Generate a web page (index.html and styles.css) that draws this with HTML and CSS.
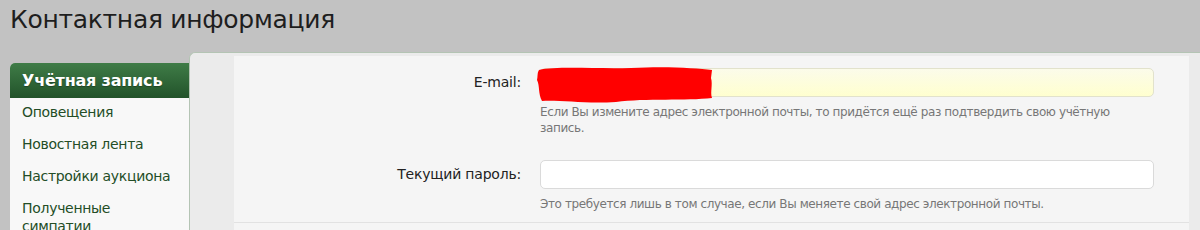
FILE: index.html
```html
<!DOCTYPE html>
<html lang="ru">
  <head>
    <meta charset="UTF-8" />
    <title>Контактная информация</title>
    <link rel="stylesheet" href="styles.css">
  </head>
  <body>
    <h1 class="page-title">Контактная информация</h1>

    <div class="page-body">
      <div class="sidebar">
        <div class="sidebar-header">Учётная запись</div>
        <div class="sidebar-item">Оповещения</div>
        <div class="sidebar-item">Новостная лента</div>
        <div class="sidebar-item">Настройки аукциона</div>
        <div class="sidebar-item">Полученные симпатии</div>
      </div>

      <div class="panel">
        <div class="panel-content">
          <div class="form-row">
            <label class="form-label">E-mail:</label>
            <div class="form-field">
              <div class="input-wrap">
                <div class="text-input email-input"></div>
                <svg class="scribble" width="180" height="40" viewBox="0 0 180 40">
                  <path d="M3 5 C20 1 60 4 95 3 C130 1 160 3 176 5 L175 13 C177 20 174 27 176 33 C150 36 110 33 80 37 C50 39 25 35 6 36 C2 29 4 21 1 15 C2 11 1 8 3 5 Z" fill="#ff0000" />
                </svg>
              </div>
              <div class="hint">Если Вы измените адрес электронной почты, то придётся ещё раз подтвердить свою учётную запись.</div>
            </div>
          </div>

          <div class="form-row">
            <label class="form-label">Текущий пароль:</label>
            <div class="form-field">
              <div class="text-input"></div>
              <div class="hint">Это требуется лишь в том случае, если Вы меняете свой адрес электронной почты.</div>
            </div>
          </div>

          <div class="divider"></div>
        </div>
      </div>
    </div>
  </body>
</html>
```

FILE: styles.css
```css
* {
  margin: 0;
  padding: 0;
  box-sizing: border-box;
}

body {
  background-color: #c2c2c2;
  font-family: "DejaVu Sans", Verdana, sans-serif;
  overflow: hidden;
  height: 230px;
}

.page-title {
  font-size: 25px;
  font-weight: normal;
  line-height: 30px;
  color: #1e1e1e;
  padding: 5px 10px 17px;
  letter-spacing: -0.3px;
}

.page-body {
  display: flex;
  align-items: flex-start;
}

.sidebar {
  width: 179px;
  margin-left: 10px;
  margin-top: 11px;
  background-color: #f8f8f8;
  border-radius: 5px 0 0 0;
  overflow: hidden;
}

.sidebar-header {
  height: 35px;
  line-height: 35px;
  padding-left: 12px;
  font-size: 16px;
  font-weight: bold;
  color: #fff;
  background: linear-gradient(#3f7c47, #22532a);
  text-shadow: 0 1px 1px rgba(0, 0, 0, 0.3);
  letter-spacing: -0.2px;
}

.sidebar-item {
  padding: 5px 17px 9px 12px;
  font-size: 14px;
  line-height: 18px;
  color: #234d26;
  letter-spacing: -0.3px;
}

.panel {
  flex: 1;
  height: 200px;
  background-color: #ebebeb;
  border: 1px solid #b4c4b4;
  border-right: none;
  border-bottom: none;
  border-radius: 6px 0 0 0;
  padding: 3px 11px 0 44px;
}

.panel-content {
  background-color: #f5f5f5;
  height: 100%;
  padding-top: 12px;
}

.form-row {
  display: grid;
  grid-template-columns: 287px 1fr;
  column-gap: 19px;
  padding-right: 35px;
  margin-bottom: 24px;
}

.form-label {
  text-align: right;
  font-size: 14px;
  line-height: 29px;
  color: #222;
  letter-spacing: -0.2px;
}

.input-wrap {
  position: relative;
}

.text-input {
  height: 29px;
  background-color: #fff;
  border: 1px solid #dadada;
  border-radius: 5px;
}

.email-input {
  background: linear-gradient(#fbfbea, #ffffcf);
  border-color: #e2e2cc;
}

.scribble {
  position: absolute;
  left: -4px;
  top: -3px;
}

.hint {
  margin-top: 7px;
  font-size: 12px;
  line-height: 16px;
  color: #777;
  padding-right: 30px;
  letter-spacing: -0.4px;
}

.form-row + .form-row {
  margin-bottom: 10px;
}

.divider {
  border-top: 1px solid #e2e2e2;
}
```
